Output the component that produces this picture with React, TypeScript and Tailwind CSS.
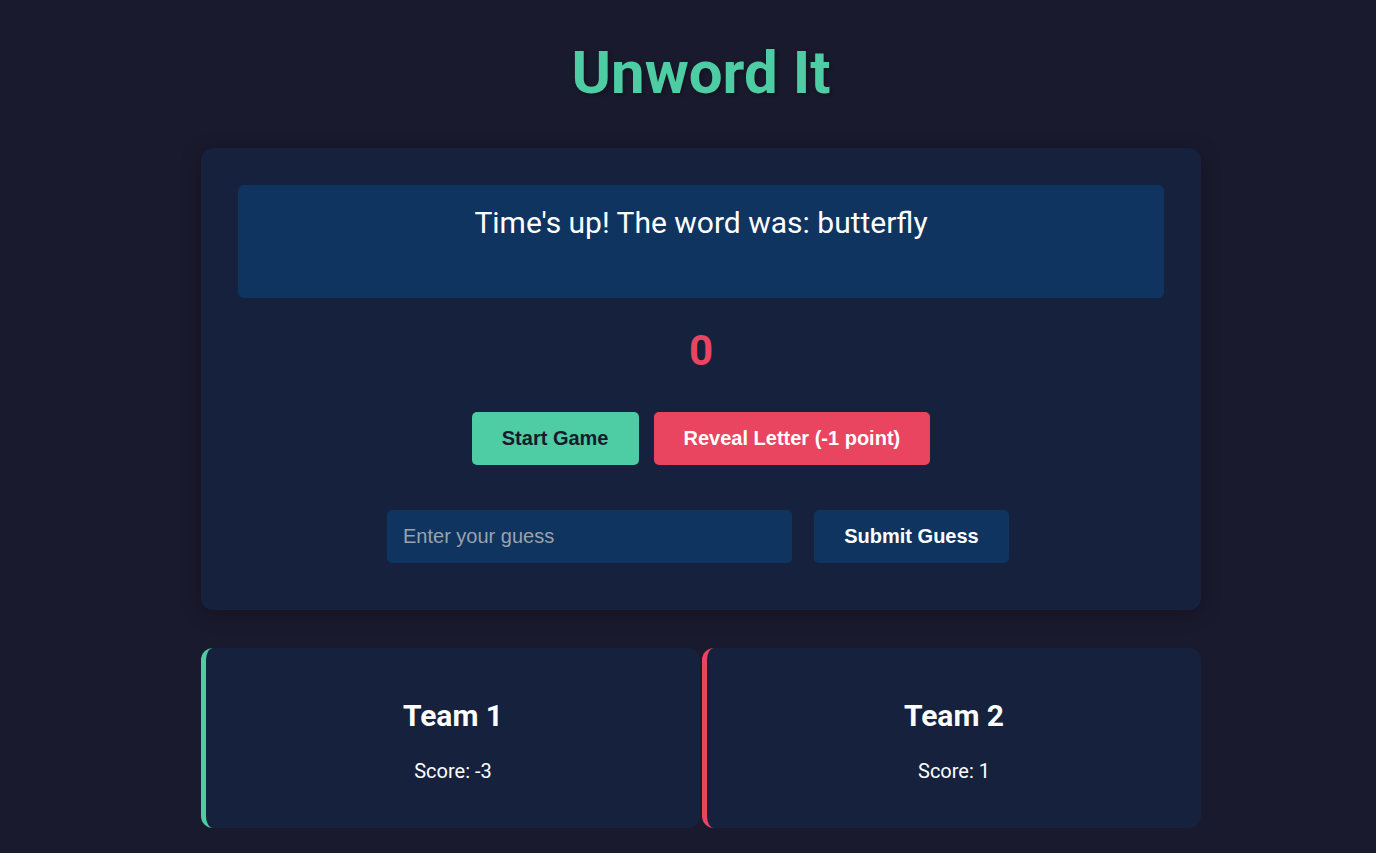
import React from "react";

export default function App() {
  return (
    <div className="min-h-screen w-full bg-[#1a1a2e] text-white font-['Roboto','Liberation_Sans',sans-serif] pt-[38px] pb-[25px] pl-[26px]">
      <div className="mx-auto w-[1000px]">
        <h1 className="text-center text-[60px] font-bold leading-[70px] text-[#4ecca3] [text-shadow:2px_2px_4px_rgba(0,0,0,0.3)]">
          Unword It
        </h1>
        <div className="mt-[40px] rounded-[12px] bg-[#16213e] px-[37px] pt-[37px] pb-[47px] shadow-[0_4px_20px_rgba(0,0,0,0.3)]">
          <div className="h-[113px] rounded-[6px] bg-[#0f3460] pt-[20px] text-center text-[30px] leading-[35px]">
            Time's up! The word was: butterfly
          </div>
          <div className="mt-[28px] text-center text-[42px] font-bold leading-[49px] text-[#e94560]">
            0
          </div>
          <div className="mt-[37px] flex justify-center gap-[15px] font-['Liberation_Sans',Arial,sans-serif]">
            <button className="h-[53px] rounded-[5px] bg-[#4ecca3] px-[30px] pb-[2px] text-[20px] font-bold text-[#1a1a2e]">
              Start Game
            </button>
            <button className="h-[53px] rounded-[5px] bg-[#e94560] px-[30px] pb-[2px] text-[20px] font-bold text-white">
              Reveal Letter (-1 point)
            </button>
          </div>
          <div className="mt-[45px] flex justify-center gap-[22px] pr-[6px] font-['Liberation_Sans',Arial,sans-serif]">
            <input
              className="h-[53px] w-[405px] rounded-[5px] bg-[#0f3460] px-[16px] text-[20px] text-white outline-none placeholder:text-[#9aa3ad]"
              placeholder="Enter your guess"
            />
            <button className="h-[53px] w-[195px] rounded-[5px] bg-[#0f3460] pb-[2px] text-[20px] font-bold text-white">
              Submit Guess
            </button>
          </div>
        </div>
        <div className="mt-[38px] grid grid-cols-2 gap-[2px]">
          <div className="h-[180px] rounded-[12px] border-l-[5px] border-[#4ecca3] bg-[#16213e] pt-[50px] text-center">
            <div className="text-[30px] font-bold leading-[35px]">Team 1</div>
            <div className="mt-[27px] text-[20px] leading-[23px]">Score: -3</div>
          </div>
          <div className="h-[180px] rounded-[12px] border-l-[5px] border-[#e94560] bg-[#16213e] pt-[50px] text-center">
            <div className="text-[30px] font-bold leading-[35px]">Team 2</div>
            <div className="mt-[27px] text-[20px] leading-[23px]">Score: 1</div>
          </div>
        </div>
      </div>
    </div>
  );
}
